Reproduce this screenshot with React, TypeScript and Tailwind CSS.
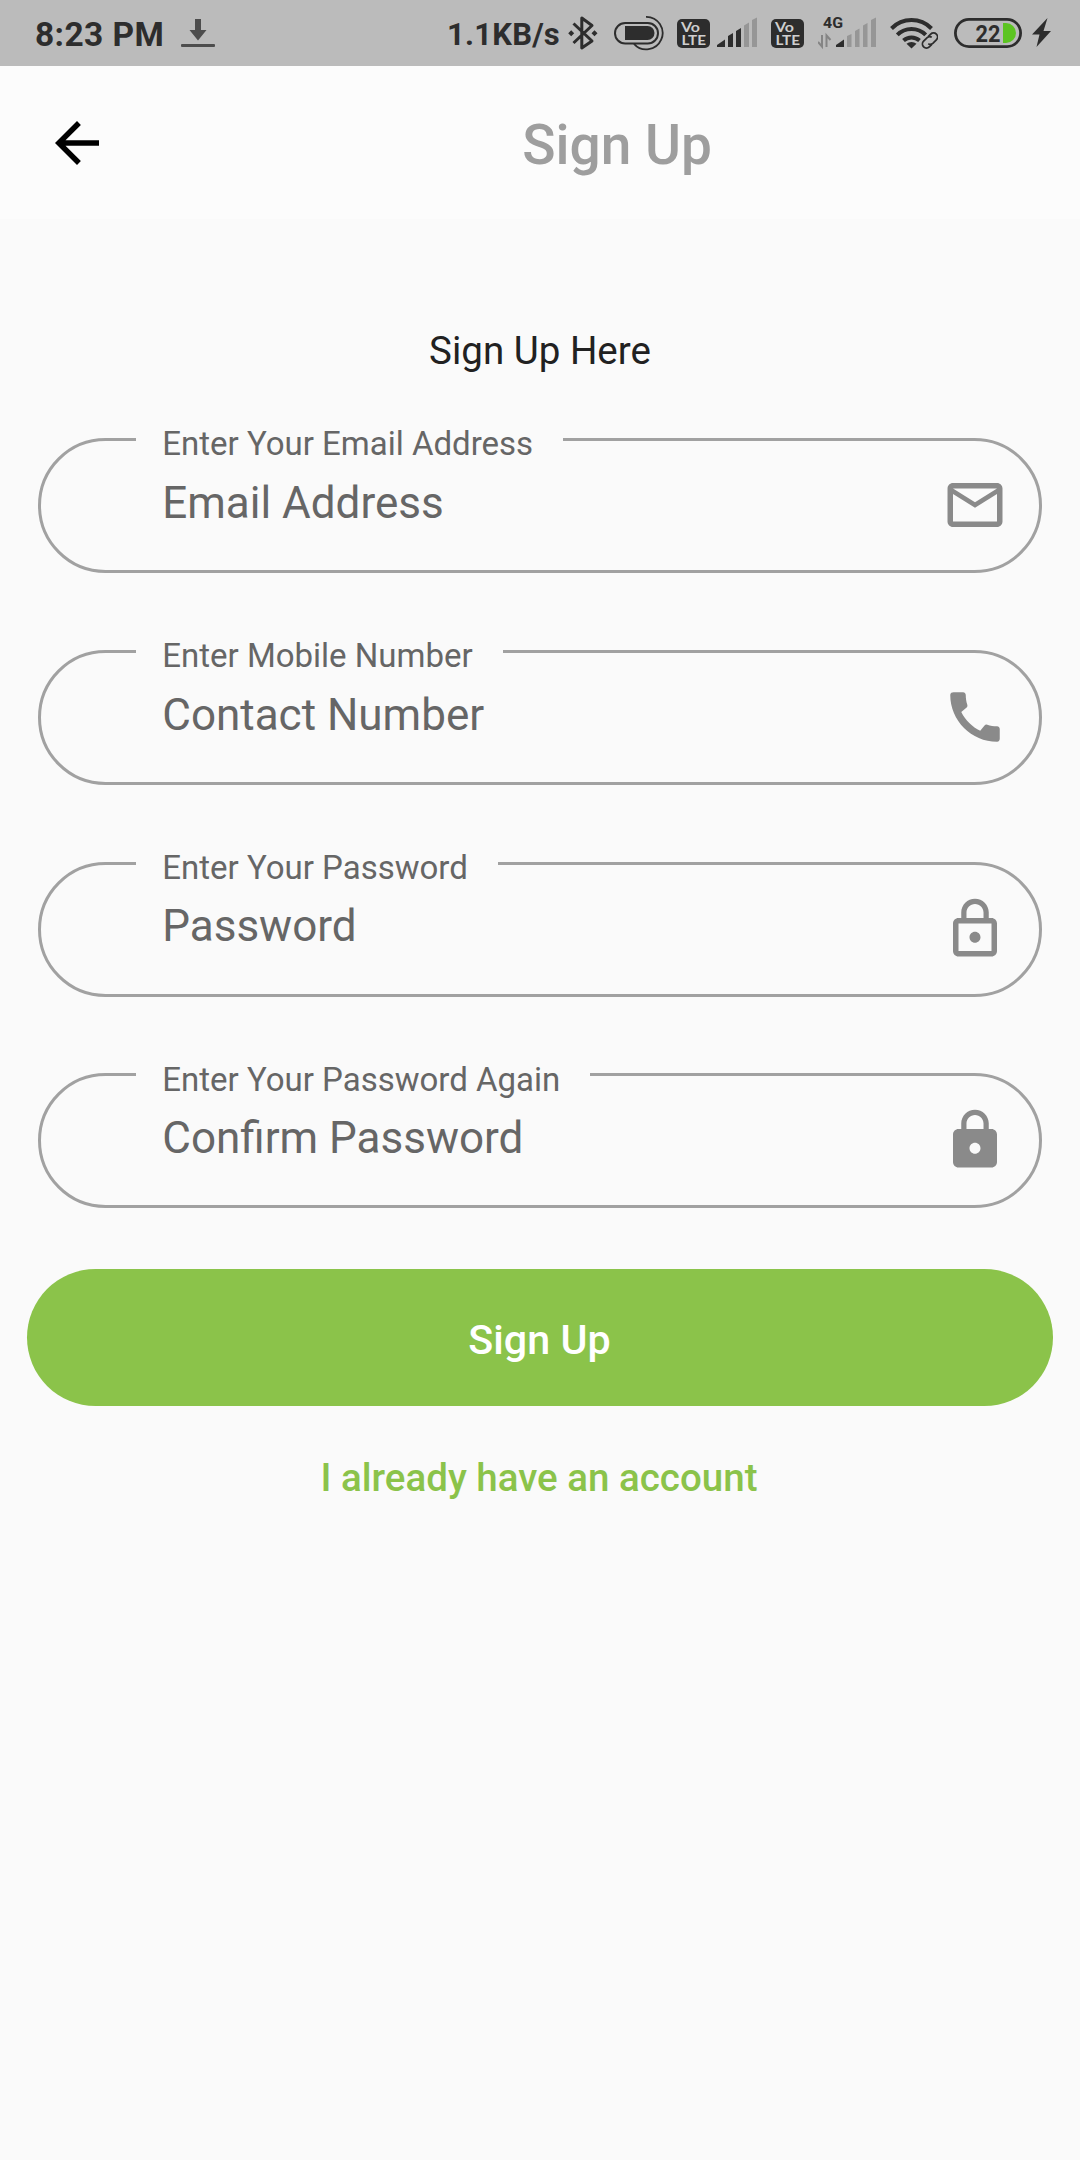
import type { IconType } from 'react-icons';
import { MdArrowBack, MdCall, MdLock, MdLockOutline, MdMailOutline } from 'react-icons/md';

interface SignUpFieldProps {
  label: string;
  placeholder: string;
  icon: IconType;
}

const fields: SignUpFieldProps[] = [
  { label: 'Enter Your Email Address', placeholder: 'Email Address', icon: MdMailOutline },
  { label: 'Enter Mobile Number', placeholder: 'Contact Number', icon: MdCall },
  { label: 'Enter Your Password', placeholder: 'Password', icon: MdLockOutline },
  { label: 'Enter Your Password Again', placeholder: 'Confirm Password', icon: MdLock },
];

const DownloadIcon = () => (
  <svg className="ml-[17px] h-[66px] w-[34px] shrink-0" viewBox="0 0 34 66" fill="#4d4d4d">
    <path d="M14 19h6v11h5.500l-8.500 10.500L8.500 30H14z" />
    <rect x="0" y="44" width="34" height="3" rx="1" />
  </svg>
);

const BluetoothIcon = () => (
  <svg className="ml-2 h-[66px] w-[30px] shrink-0" viewBox="0 0 30 66" fill="none" stroke="#2d2d2d" strokeWidth="3">
    <path d="M5.500 23.500L24 41 13.800 48V18L24 25.500 5.500 43" strokeLinejoin="round" />
    <path d="M3.200 30.300l3 3-3 3-3-3zM26.500 30.300l3 3-3 3-3-3z" fill="#2d2d2d" stroke="none" />
  </svg>
);

const BatteryDeviceIcon = () => (
  <svg className="ml-4 h-[66px] w-[50px] shrink-0" viewBox="0 0 50 66" fill="none" stroke="#2d2d2d">
    <rect x="1" y="23" width="43" height="20.500" rx="10.200" strokeWidth="2" />
    <path d="M11 26h22.500a7 7 0 0 1 0 14H11z" fill="#2d2d2d" stroke="none" />
    <path d="M32 16.800a16.300 16.300 0 1 1-12 27" strokeWidth="1.800" />
  </svg>
);

const VolteIcon = () => (
  <svg className="h-[66px] w-[33px] shrink-0" viewBox="0 0 33 66">
    <rect x="0" y="19" width="33" height="29" rx="5" fill="#2d2d2d" />
    <g fill="#cfcfcf" fontFamily="Lato, sans-serif" fontWeight="700">
      <text x="4" y="32" fontSize="13.500" textLength="19" lengthAdjust="spacingAndGlyphs">Vo</text>
      <text x="4.500" y="45" fontSize="14" textLength="24.500" lengthAdjust="spacingAndGlyphs">LTE</text>
    </g>
  </svg>
);

const SignalIcon = () => (
  <svg className="ml-[7px] h-[66px] w-10 shrink-0" viewBox="0 0 40 66">
    <path d="M0 47v-2l8-5.500V47zM11 47V36l5-3v14zM19 47V31l5-3v19z" fill="#2d2d2d" />
    <path d="M27 47V25.500l5-3V47zM35 47V20l5-2.500V47z" fill="#969696" />
  </svg>
);

const MobileDataIcon = () => (
  <svg className="ml-[14px] h-[66px] w-[58px] shrink-0" viewBox="0 0 58 66">
    <text x="5" y="28" fill="#2d2d2d" fontFamily="Roboto, sans-serif" fontSize="15.500" fontWeight="700" textLength="20" lengthAdjust="spacingAndGlyphs">
      4G
    </text>
    <path d="M4 35v11.500L0 42M8.500 47V35.500l4 4.500" fill="none" stroke="#858585" strokeWidth="2" />
    <path d="M18 47v-2l8-5.500V47z" fill="#2d2d2d" />
    <path d="M29 47V36l4.500-2v13zM37 47V31l4.500-2.500V47zM45 47V25.500l4.500-2.500v24zM53 47V20l5-2.500V47z" fill="#969696" />
  </svg>
);

const WifiIcon = () => (
  <svg className="ml-[14px] h-[66px] w-12 shrink-0" viewBox="0 0 48 66" fill="none" stroke="#2d2d2d">
    <path d="M1.500 28.500a28 28 0 0 1 40 0M7.300 34.800a20 20 0 0 1 28.400 0M13.500 40.500a12 12 0 0 1 16 0" strokeWidth="4" />
    <path d="M16.500 43.800a7.500 7.500 0 0 1 10 0L21.500 48.500z" fill="#2d2d2d" stroke="none" />
    <g transform="rotate(-45 40 40.500)" strokeWidth="1.800">
      <path d="M38.500 44.500H35a4 4 0 0 1 0-8h5a4 4 0 0 1 3.500 3" />
      <path d="M41.500 36.500H45a4 4 0 0 1 0 8h-5a4 4 0 0 1-3.500-3" />
    </g>
  </svg>
);

const BatteryIcon = () => (
  <svg className="ml-4 h-[66px] w-[68px] shrink-0" viewBox="0 0 68 66">
    <rect x="1.400" y="19.400" width="65.200" height="27.200" rx="13.600" fill="none" stroke="#2d2d2d" strokeWidth="2.800" />
    <path d="M49 23h3a10 10 0 0 1 0 20h-3z" fill="#5cc421" />
    <text x="21.500" y="41.500" fill="#2d2d2d" fontFamily="Roboto, sans-serif" fontSize="23.500" fontWeight="700" textLength="25" lengthAdjust="spacingAndGlyphs">
      22
    </text>
  </svg>
);

const BoltIcon = () => (
  <svg className="ml-[10px] h-[66px] w-[19px] shrink-0" viewBox="0 0 19 66" fill="#2d2d2d">
    <path d="M15.500 18L0 34.500h7.500L4.500 47 19 31h-7.500z" />
  </svg>
);

const StatusBar = () => (
  <div className="flex h-[66px] items-center justify-between bg-[#bbbbbb] pr-[29px] pl-[35px] font-bold text-[#2d2d2d]">
    <div className="flex items-center">
      <span className="pt-[3px] text-[33.500px] leading-none tracking-[0.4px] whitespace-nowrap">8:23 PM</span>
      <DownloadIcon />
    </div>
    <div className="flex items-center">
      <span className="pt-0.5 text-[31px] leading-none tracking-[0.2px] whitespace-nowrap">1.1KB/s</span>
      <BluetoothIcon />
      <BatteryDeviceIcon />
      <div className="ml-[13px] flex">
        <VolteIcon />
        <SignalIcon />
      </div>
      <div className="ml-[14px] flex">
        <VolteIcon />
        <MobileDataIcon />
      </div>
      <WifiIcon />
      <BatteryIcon />
      <BoltIcon />
    </div>
  </div>
);

const SignUpField: React.FC<SignUpFieldProps> = ({ label, placeholder, icon: Icon }) => (
  <div className="flex h-[135px] items-center justify-between rounded-full border-3 border-[#a1a1a1] pr-[30.5px] pl-[95px] text-[#666666]">
    <div className="flex h-full flex-col items-start">
      {/* The label sits on the border and masks the line behind it */}
      <span className="-mt-[16.75px] bg-[#fafafa] pr-[30px] pl-[26px] text-[33px] leading-[40px] whitespace-nowrap">{label}</span>
      <span className="mt-[12.5px] pl-[26px] text-[44px] leading-[52px] whitespace-nowrap">{placeholder}</span>
    </div>
    <Icon className="mb-px size-[66px] text-[#8a8a8a]" />
  </div>
);

export default function App() {
  return (
    <div className="flex h-[2160px] w-[1080px] flex-col overflow-hidden bg-[#fafafa] font-[Roboto,sans-serif]">
      <StatusBar />

      {/* App bar */}
      <header className="flex h-[153px] items-center bg-[#fcfcfc]">
        <button className="flex w-[154px] justify-center">
          <MdArrowBack className="size-[66px] text-black" />
        </button>
        <h1 className="flex-1 pt-1 text-center text-[55px] leading-[64px] font-medium text-[#9e9e9e]">Sign Up</h1>
      </header>

      <main className="flex flex-col px-[27px] pt-[109px]">
        <p className="text-center text-[38.5px] leading-[46px] text-[#212121]">Sign Up Here</p>

        <div className="mt-16 flex flex-col gap-[76.75px] px-[11.25px]">
          {fields.map((field) => (
            <SignUpField key={field.label} {...field} />
          ))}
        </div>

        <button className="mt-[60.25px] h-[137.5px] rounded-full bg-[#8bc34a] pt-[7px] pr-px text-[41.25px] font-medium text-white">
          Sign Up
        </button>
        <button className="mt-[49px] pr-0.5 text-[38.5px] leading-[46px] font-medium text-[#8bc34a]">
          I already have an account
        </button>
      </main>
    </div>
  );
}
